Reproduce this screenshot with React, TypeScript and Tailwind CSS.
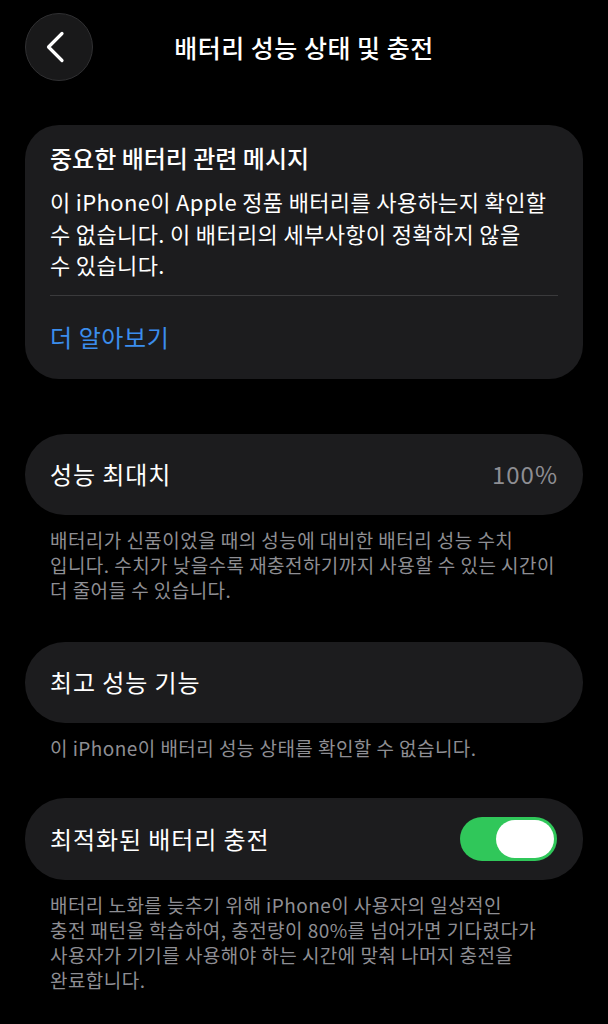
import React, { useState } from 'react';

const font = { fontFamily: '"Noto Sans CJK KR", "Noto Sans", sans-serif' };

const Footnote: React.FC<{ children: React.ReactNode }> = ({ children }) => (
  <p className="mt-[12px] whitespace-nowrap px-[25px] text-[19px] leading-[25px] tracking-[0.45px] text-[#8e8e93]">
    {children}
  </p>
);

const App: React.FC = () => {
  const [optimized, setOptimized] = useState(true);

  return (
    <div className="min-h-screen w-full bg-black text-white" style={font}>
      <div className="px-[25px]">
        {/* header */}
        <div className="relative flex h-[95px] items-start pt-[13px]">
          <button className="flex h-[68px] w-[68px] items-center justify-center rounded-full border border-[#303032] bg-[#19191a]">
            <svg width="22" height="32" viewBox="0 0 22 32" fill="none" className="-ml-[6px]">
              <path d="M17 2.5 L3.5 16 L17 29.5" stroke="white" strokeWidth="3.2" strokeLinecap="round" strokeLinejoin="round" />
            </svg>
          </button>
          <h1 className="pointer-events-none absolute left-0 right-0 top-[30px] text-center text-[25px] font-medium leading-[34px] tracking-[0.5px]">
            배터리 성능 상태 및 충전
          </h1>
        </div>

        {/* important message */}
        <div className="mt-[30px] rounded-[34px] bg-[#1c1c1e] px-[25px] pt-[17px] pb-[26px]">
          <h2 className="text-[24px] font-medium leading-[32px]">중요한 배터리 관련 메시지</h2>
          <p className="mt-[12px] whitespace-nowrap text-[22px] leading-[31.5px] tracking-[0.35px]">
            이 iPhone이 Apple 정품 배터리를 사용하는지 확인할
            <br />
            수 없습니다. 이 배터리의 세부사항이 정확하지 않을
            <br />
            수 있습니다.
          </p>
          <div className="mt-[14px] h-px bg-[#3a3a3c]" />
          <a className="mt-[25px] block text-[24px] leading-[32px] tracking-[0.6px] text-[#3b8ded]">더 알아보기</a>
        </div>

        {/* peak capacity */}
        <div className="mt-[55px] flex h-[81px] items-center justify-between rounded-[40px] bg-[#1c1c1e] px-[25px]">
          <span className="text-[24px] tracking-[0.9px]">성능 최대치</span>
          <span className="text-[24px] tracking-[1px] text-[#8e8e93]">100%</span>
        </div>
        <Footnote>
          배터리가 신품이었을 때의 성능에 대비한 배터리 성능 수치
          <br />
          입니다. 수치가 낮을수록 재충전하기까지 사용할 수 있는 시간이
          <br />
          더 줄어들 수 있습니다.
        </Footnote>

        {/* peak performance */}
        <div className="mt-[40px] flex h-[81px] items-center rounded-[40px] bg-[#1c1c1e] px-[25px]">
          <span className="text-[24px] tracking-[0.9px]">최고 성능 기능</span>
        </div>
        <Footnote>이 iPhone이 배터리 성능 상태를 확인할 수 없습니다.</Footnote>

        {/* optimized charging */}
        <div className="mt-[38px] flex h-[82px] items-center justify-between rounded-[40px] bg-[#1c1c1e] pl-[25px] pr-[26px]">
          <span className="text-[24px] tracking-[0.9px]">최적화된 배터리 충전</span>
          <button
            onClick={() => setOptimized(!optimized)}
            className={`flex h-[44px] w-[97px] items-center rounded-full px-[3px] ${
              optimized ? 'justify-end bg-[#30c75a]' : 'justify-start bg-[#39393d]'
            }`}
          >
            <span className="h-[38px] w-[58px] rounded-full bg-white" />
          </button>
        </div>
        <Footnote>
          배터리 노화를 늦추기 위해 iPhone이 사용자의 일상적인
          <br />
          충전 패턴을 학습하여, 충전량이 80%를 넘어가면 기다렸다가
          <br />
          사용자가 기기를 사용해야 하는 시간에 맞춰 나머지 충전을
          <br />
          완료합니다.
        </Footnote>
      </div>
    </div>
  );
};

export default App;
